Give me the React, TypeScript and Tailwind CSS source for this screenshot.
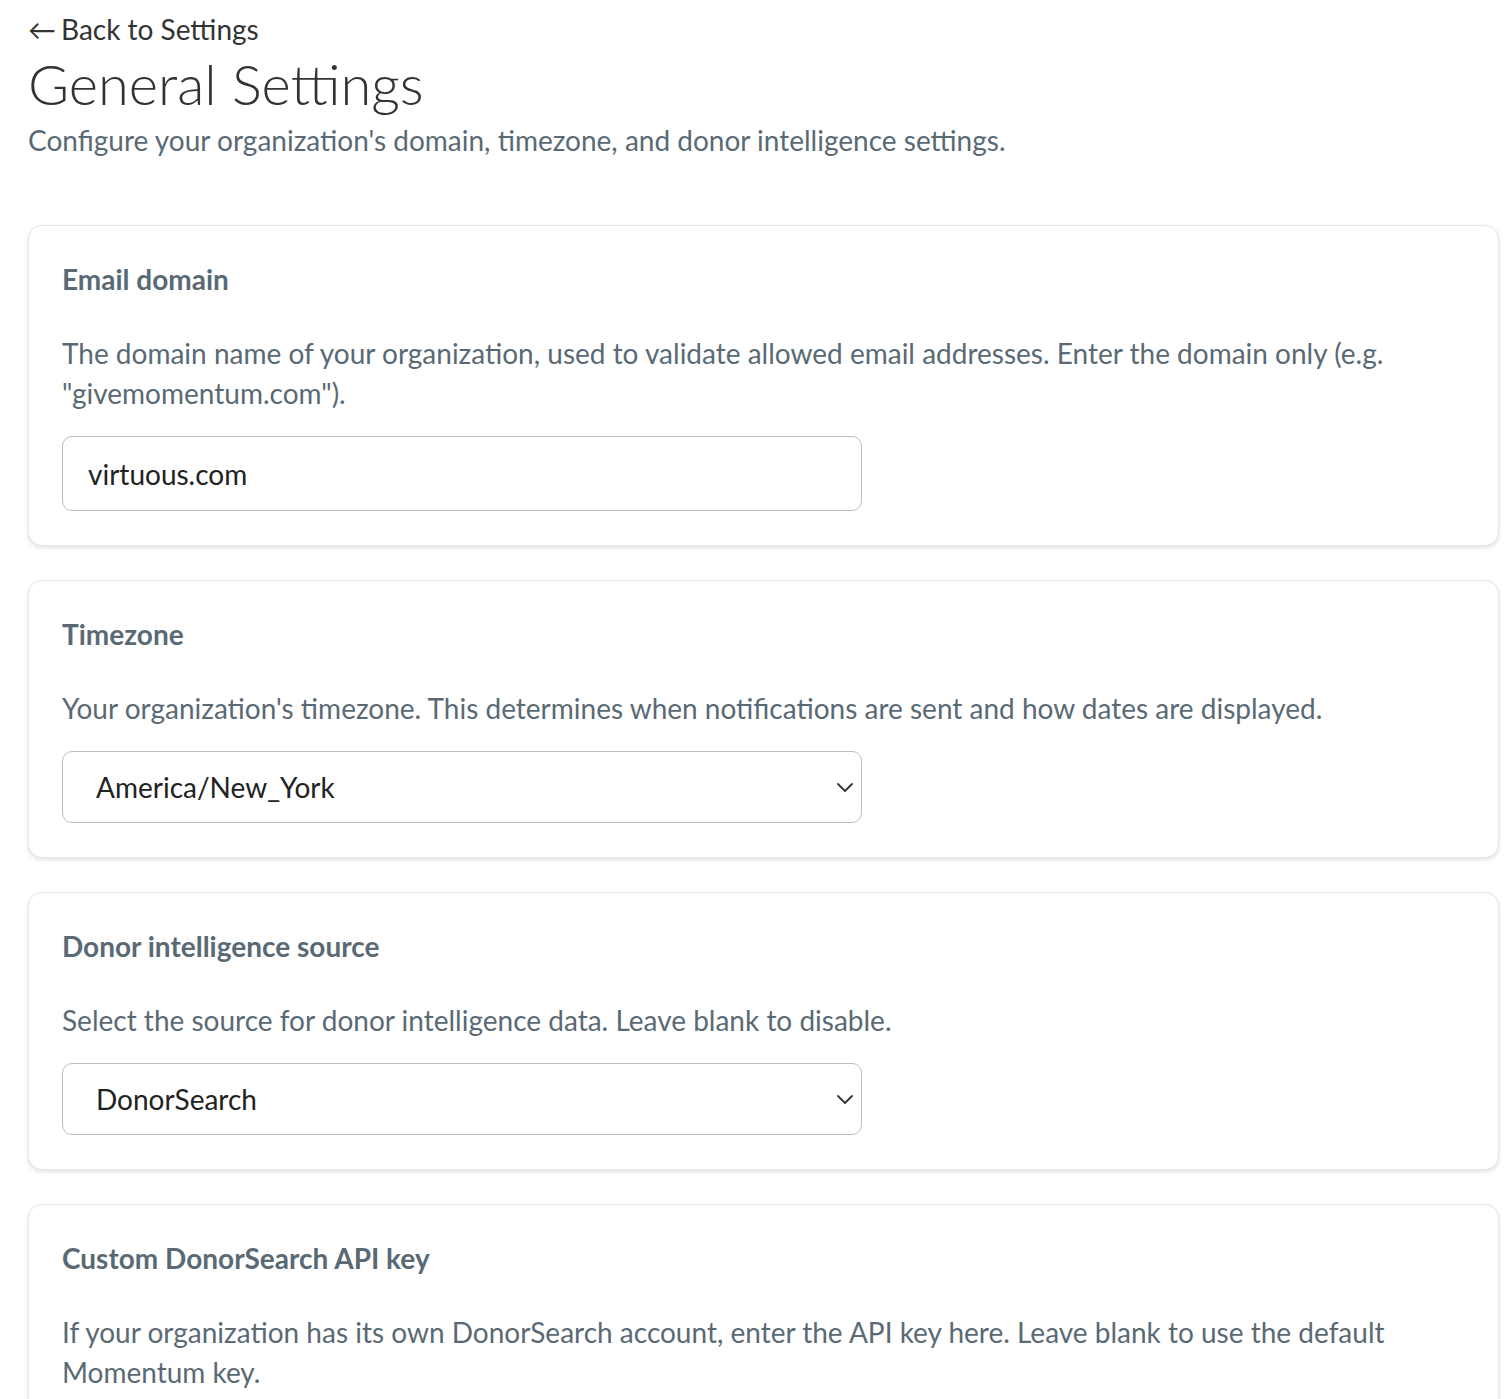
import React from 'react';

function ChevronDown() {
  return (
    <svg width="18" height="12" viewBox="0 0 18 12" fill="none" className="shrink-0">
      <path d="M2 3l7 7 7-7" stroke="#333" strokeWidth="1.8" strokeLinecap="round" strokeLinejoin="round" />
    </svg>
  );
}

function Card({ title, description, children }: { title: string; description: string; children?: React.ReactNode }) {
  return (
    <div className="bg-white border border-[#e6e6e6] rounded-[14px] shadow-[0_2px_4px_rgba(0,0,0,0.12)] px-[33px] pt-[33px] pb-[34px]">
      <h2 className="text-[28px] leading-[40px] font-bold text-[#5a6a75]">{title}</h2>
      <p className="mt-[34px] text-[28px] leading-[40px] text-[#5a6a75]">{description}</p>
      {children}
    </div>
  );
}

function SelectBox({ value }: { value: string }) {
  return (
    <div className="mt-[23px] w-[800px] h-[72px] border-[1.5px] border-[#b9bec3] rounded-[10px] flex items-center justify-between pl-[33px] pr-[7px]">
      <span className="text-[28px] text-[#222]">{value}</span>
      <ChevronDown />
    </div>
  );
}

export default function App() {
  const font = { fontFamily: 'Lato, "Open Sans", sans-serif' };
  return (
    <div className="min-h-screen bg-white pl-[28px] pr-[7px]" style={font}>
      <div className="pt-[10px] flex items-center text-[28px] leading-[38px] text-[#333]">
        <span className="mr-[5px]">←</span>
        <span>Back to Settings</span>
      </div>
      <h1 className="text-[56px] leading-[72px] font-light text-[#333]">General Settings</h1>
      <p className="text-[28px] leading-[40px] text-[#5a6a75]">
        Configure your organization's domain, timezone, and donor intelligence settings.
      </p>

      <div className="mt-[65px] flex flex-col gap-[34px]">
        <Card
          title="Email domain"
          description={'The domain name of your organization, used to validate allowed email addresses. Enter the domain only (e.g. "givemomentum.com").'}
        >
          <div className="mt-[23px] w-[800px] h-[75px] border-[1.5px] border-[#b9bec3] rounded-[10px] flex items-center pl-[25px]">
            <span className="text-[28px] text-[#222]">virtuous.com</span>
          </div>
        </Card>

        <Card
          title="Timezone"
          description="Your organization's timezone. This determines when notifications are sent and how dates are displayed."
        >
          <SelectBox value="America/New_York" />
        </Card>

        <Card
          title="Donor intelligence source"
          description="Select the source for donor intelligence data. Leave blank to disable."
        >
          <SelectBox value="DonorSearch" />
        </Card>

        <Card
          title="Custom DonorSearch API key"
          description="If your organization has its own DonorSearch account, enter the API key here. Leave blank to use the default Momentum key."
        >
          <div className="mt-[23px] w-[800px] h-[75px] border-[1.5px] border-[#b9bec3] rounded-[10px]" />
        </Card>
      </div>
    </div>
  );
}
